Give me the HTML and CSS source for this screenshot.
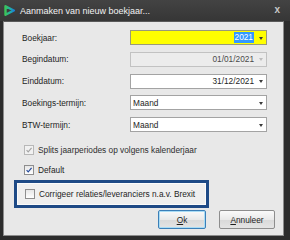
FILE: index.html
```html
<!DOCTYPE html>
<html lang="nl">
<head>
  <meta charset="UTF-8">
  <title>Aanmaken van nieuw boekjaar</title>
  <link rel="stylesheet" href="styles.css">
</head>
<body>
  <div class="window">
    <div class="titlebar">
      <svg class="app-icon" width="11" height="11" viewBox="0 0 11 11">
        <defs>
          <linearGradient id="logoGrad" x1="0" y1="0" x2="1" y2="0">
            <stop offset="0" stop-color="#3cc35a"/>
            <stop offset="0.55" stop-color="#1fb3a6"/>
            <stop offset="1" stop-color="#1d7fd6"/>
          </linearGradient>
        </defs>
        <path d="M1.5 1.2 L9.8 5.5 L1.5 9.8 Z" fill="none" stroke="url(#logoGrad)" stroke-width="2.4" stroke-linejoin="round"/>
      </svg>
      <span class="title">Aanmaken van nieuw boekjaar...</span>
      <span class="close">x</span>
    </div>

    <div class="client">
      <div class="form">
        <div class="row">
          <span class="label">Boekjaar:</span>
          <div class="field yellow right"><span class="selected">2021</span><i class="arrow"></i></div>
        </div>
        <div class="row">
          <span class="label">Begindatum:</span>
          <div class="field disabled right"><span>01/01/2021</span><i class="arrow"></i></div>
        </div>
        <div class="row">
          <span class="label">Einddatum:</span>
          <div class="field right"><span>31/12/2021</span><i class="arrow"></i></div>
        </div>
        <div class="row">
          <span class="label">Boekings-termijn:</span>
          <div class="field"><span class="grow">Maand</span><i class="arrow"></i></div>
        </div>
        <div class="row">
          <span class="label">BTW-termijn:</span>
          <div class="field"><span class="grow">Maand</span><i class="arrow"></i></div>
        </div>
      </div>

      <div class="checks">
        <label class="check dim">
          <span class="box"><svg viewBox="0 0 9 9"><path d="M1.8 4.6 L3.6 6.6 L7.4 2" fill="none" stroke-width="1.3"/></svg></span>
          Splits jaarperiodes op volgens kalenderjaar
        </label>
        <label class="check on">
          <span class="box"><svg viewBox="0 0 9 9"><path d="M1.8 4.6 L3.6 6.6 L7.4 2" fill="none" stroke-width="1.3"/></svg></span>
          Default
        </label>
      </div>

      <div class="highlight">
        <label class="check">
          <span class="box"></span>
          Corrigeer relaties/leveranciers n.a.v. Brexit
        </label>
      </div>

      <div class="buttons">
        <button class="btn default"><u>O</u>k</button>
        <button class="btn wide"><u>A</u>nnuleer</button>
      </div>
    </div>
  </div>
</body>
</html>
```

FILE: styles.css
```css
* {
  margin: 0;
  padding: 0;
  box-sizing: border-box;
}

html, body {
  width: 290px;
  height: 240px;
  background: #2b2b2b;
  overflow: hidden;
}

body {
  font-family: "Liberation Sans", Arial, sans-serif;
  font-size: 8.3px;
  color: #1e1e1e;
}

.window {
  width: 290px;
  height: 240px;
  display: flex;
  flex-direction: column;
  background: #2c2c2c;
  padding: 0 6px 4px 3px;
}

.titlebar {
  height: 21px;
  display: flex;
  align-items: center;
  margin-left: -3px;
  margin-right: -6px;
  padding: 0 10px 0 4px;
  background: linear-gradient(#434343, #363636);
}

.app-icon {
  margin-right: 5px;
  flex: none;
}

.title {
  color: #f2f2f2;
  font-size: 9px;
  flex: 1;
  padding-top: 1px;
}

.close {
  color: #c8c8c8;
  font-size: 10px;
  font-weight: bold;
  line-height: 1;
  margin-top: -2px;
}

.client {
  flex: 1;
  background: #e8e8e8;
  border: 1px solid #8c8c8c;
  border-top-color: #5a5a5a;
  display: flex;
  flex-direction: column;
  padding: 8px 8px 0 18px;
}

.form {
  display: flex;
  flex-direction: column;
  gap: 6.8px;
}

.row {
  display: flex;
  align-items: center;
  height: 15px;
}

.label {
  width: 108px;
  flex: none;
}

.field {
  width: 137px;
  height: 15px;
  border: 1px solid #a3a3a3;
  background: #fff;
  display: flex;
  align-items: center;
  padding: 0 3px 0 2px;
}

.field.right {
  justify-content: flex-end;
}

.field .grow {
  flex: 1;
}

.field.yellow {
  background: #ffff00;
  border-color: #9a9a7a;
}

.field.disabled {
  background: #ececec;
  border-color: #c2c2c2;
  color: #4a4a4a;
}

.selected {
  background: #3399ff;
  color: #fff;
  padding: 0 1px;
  line-height: 11px;
}

.arrow {
  width: 0;
  height: 0;
  border-left: 2.5px solid transparent;
  border-right: 2.5px solid transparent;
  border-top: 3px solid #3a3a3a;
  margin-left: 5px;
  margin-top: 1px;
}

.field.disabled .arrow {
  border-top-color: #bdbdbd;
}

.checks {
  display: flex;
  flex-direction: column;
  gap: 8px;
  margin-top: 12px;
  padding-left: 2px;
}

.check {
  display: flex;
  align-items: center;
  gap: 4px;
  height: 12px;
}

.box {
  width: 10px;
  height: 10px;
  border: 1px solid #8e8e8e;
  background: linear-gradient(#e6e6e6, #ffffff);
  display: flex;
  flex: none;
}

.box svg {
  width: 8px;
  height: 8px;
}

.check.dim {
  color: #2e2e2e;
}

.check.dim .box {
  border-color: #b8b8b8;
  background: #f1f1f1;
}

.check.dim path {
  stroke: #a3a3a3;
}

.check.on path {
  stroke: #23489a;
}

.highlight {
  margin: 4px 0 0 -8px;
  width: 195px;
  height: 28px;
  border: 3px solid #1e4a86;
  background: #efefef;
  box-shadow: inset 0 0 0 1px #fbfbfb;
  display: flex;
  align-items: center;
  padding-left: 8px;
}

.buttons {
  display: flex;
  justify-content: flex-end;
  gap: 13px;
  margin-top: 2px;
}

.btn {
  font-family: "Liberation Sans", Arial, sans-serif;
  font-size: 8.3px;
  color: #1e1e1e;
  width: 48px;
  height: 19px;
  border: 1px solid #8d8d8d;
  border-radius: 2px;
  background: linear-gradient(#fafafa, #e9e9e9 50%, #d9d9d9 51%, #e4e4e4);
}

.btn.default {
  border-color: #3b7fb8;
  box-shadow: inset 0 0 0 1px #a9dcf5;
}

.btn.wide {
  width: 56px;
}
```
